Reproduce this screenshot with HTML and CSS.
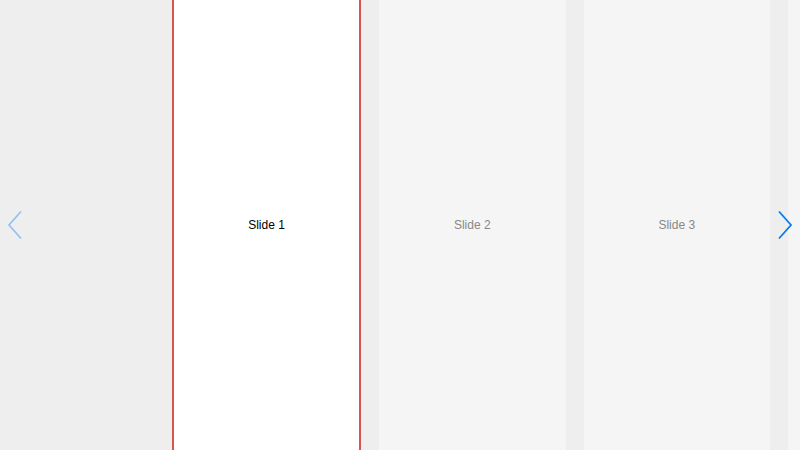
FILE: index.html
```html
<!DOCTYPE html>
<html>
<head>
<meta charset="utf-8">
<link rel="stylesheet" href="styles.css">
</head>
<body>
<div class="carousel">
  <div class="track">
    <div class="slide active">Slide 1</div>
    <div class="slide">Slide 2</div>
    <div class="slide">Slide 3</div>
    <div class="slide">Slide 4</div>
  </div>
  <div class="nav prev">
    <svg width="16" height="30" viewBox="0 0 16 30"><path d="M14 1.5 L2 15 L14 28.5" fill="none" stroke="currentColor" stroke-width="1.6"/></svg>
  </div>
  <div class="nav next">
    <svg width="16" height="30" viewBox="0 0 16 30"><path d="M2 1.5 L14 15 L2 28.5" fill="none" stroke="currentColor" stroke-width="1.8"/></svg>
  </div>
</div>
</body>
</html>
```
FILE: styles.css
```css
html, body {
  margin: 0;
  padding: 0;
}
body {
  background: #eeeeee;
  font-family: "Liberation Sans", Arial, sans-serif;
}
.carousel {
  position: relative;
  width: 800px;
  height: 450px;
  overflow: hidden;
}
.track {
  display: flex;
  gap: 18px;
  padding-left: 172px;
  height: 100%;
}
.slide {
  flex: 0 0 186.5px;
  height: 100%;
  background: #f5f5f5;
  color: #888888;
  font-size: 12px;
  display: flex;
  align-items: center;
  justify-content: center;
}
.slide.active {
  flex-basis: 185px;
  background: #ffffff;
  color: #000000;
  border-left: 2px solid #d9534f;
  border-right: 2px solid #d9534f;
  box-sizing: content-box;
}
.nav {
  position: absolute;
  top: 210px;
  width: 16px;
  height: 30px;
  display: flex;
}
.prev {
  left: 7px;
  color: #007aff;
  opacity: 0.4;
}
.next {
  left: 777px;
  color: #0a7aef;
}
```
